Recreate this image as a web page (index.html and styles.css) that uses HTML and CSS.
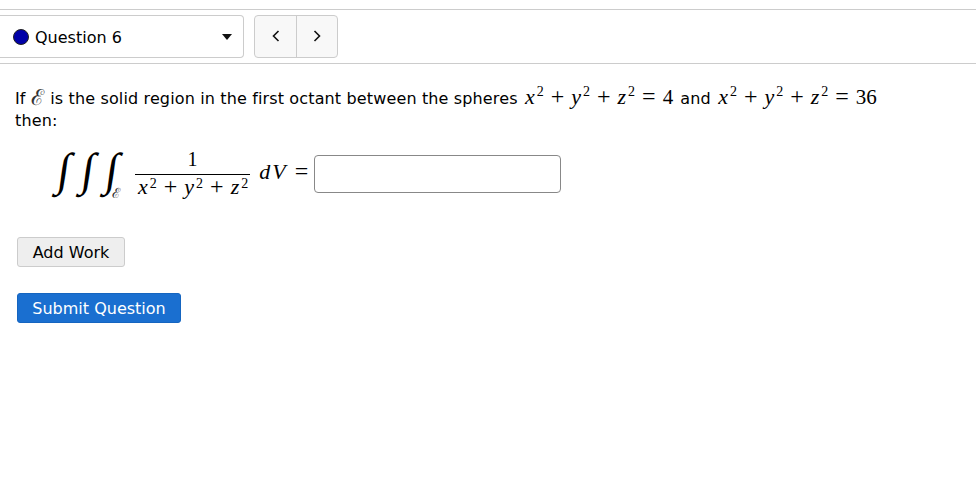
FILE: index.html
```html
<!DOCTYPE html>
<html lang="en">
<head>
  <meta charset="UTF-8" />
  <title>Question 6</title>
  <link rel="stylesheet" href="styles.css">
</head>
<body>
  <!-- Question picker -->
  <div class="nav-bar">
    <div class="picker">
      <span class="dot"></span>
      <span class="picker-label">Question 6</span>
      <span class="caret"></span>
    </div>
    <div class="arrows">
      <button class="arrow">
        <svg width="8" height="12" viewBox="0 0 8 12"><path d="M6.5 1 L1.5 6 L6.5 11" fill="none" stroke="#111" stroke-width="1.6"/></svg>
      </button>
      <button class="arrow">
        <svg width="8" height="12" viewBox="0 0 8 12"><path d="M1.5 1 L6.5 6 L1.5 11" fill="none" stroke="#111" stroke-width="1.6"/></svg>
      </button>
    </div>
  </div>

  <div class="question">
    <p class="prompt">If <span class="script">ℰ</span> is the solid region in the first octant between the spheres
      <span class="math"><i>x</i><sup>2</sup><span class="op">+</span><i>y</i><sup>2</sup><span class="op">+</span><i>z</i><sup>2</sup><span class="op">=</span>4</span> and
      <span class="math"><i>x</i><sup>2</sup><span class="op">+</span><i>y</i><sup>2</sup><span class="op">+</span><i>z</i><sup>2</sup><span class="op">=</span>36</span> then:</p>

    <div class="equation">
      <div class="integrals">
        <span class="integral">∫</span>
        <span class="integral">∫</span>
        <span class="integral">∫</span>
        <span class="script sub">ℰ</span>
      </div>
      <div class="fraction">
        <span class="numerator">1</span>
        <span class="math denominator"><i>x</i><sup>2</sup><span class="op">+</span><i>y</i><sup>2</sup><span class="op">+</span><i>z</i><sup>2</sup></span>
      </div>
      <span class="math dv"><i>dV</i><span class="op">=</span></span>
      <input class="answer" type="text">
    </div>

    <button class="btn-work">Add Work</button>
    <button class="btn-submit">Submit Question</button>
  </div>
</body>
</html>
```

FILE: styles.css
```css
* {
  box-sizing: border-box;
}

body {
  margin: 0;
  padding-top: 9px;
  background-color: white;
  color: black;
  font-family: "DejaVu Sans", sans-serif;
  font-size: 16px;
  overflow: hidden;
}

.nav-bar {
  display: flex;
  align-items: center;
  gap: 10px;
  height: 55px;
  border-top: 1px solid #ccc;
  border-bottom: 1px solid #ccc;
}

.picker {
  display: flex;
  align-items: center;
  width: 244px;
  height: 43px;
  padding: 0 11px 0 13px;
  border: 1px solid #ccc;
  border-left: none;
  border-radius: 0 4px 4px 0;
}

.dot {
  width: 16px;
  height: 16px;
  border-radius: 50%;
  background: #0000a8;
  border: 1px solid #222;
}

.picker-label {
  margin-left: 6px;
  padding-top: 1px;
  flex: 1;
}

.caret {
  width: 0;
  height: 0;
  border-left: 5px solid transparent;
  border-right: 5px solid transparent;
  border-top: 6px solid #111;
}

.arrows {
  display: flex;
  height: 43px;
  border: 1px solid #ccc;
  border-radius: 4px;
  background: #f8f8f8;
  overflow: hidden;
}

.arrow {
  width: 41px;
  padding: 0;
  border: none;
  background: none;
}

.arrow + .arrow {
  border-left: 1px solid #ccc;
}

.question {
  padding: 22px 15px;
}

.prompt {
  margin: 0;
  width: 880px;
  line-height: 22px;
  letter-spacing: 0.14px;
}

.math {
  margin: 0 2px;
  font-family: "Liberation Serif", serif;
  font-size: 21px;
  letter-spacing: 0;
}

.math i {
  font-size: 22px;
  font-style: italic;
  letter-spacing: 2px;
}

.op {
  margin: 0 7px;
  font-size: 24px;
  line-height: 0;
}

sup {
  font-size: 14px;
  line-height: 0;
  vertical-align: 8px;
}

.script {
  margin-right: 1px;
  font-family: "DejaVu Serif", serif;
  font-size: 22px;
  line-height: 0;
  vertical-align: -1px;
  color: #333;
}

.equation {
  display: flex;
  align-items: center;
  margin: 11px 0 0 33px;
  height: 62px;
  font-family: "Liberation Serif", serif;
}

.integrals {
  display: flex;
  align-items: center;
  position: relative;
  width: 86px;
  padding: 0 0 10px 10px;
}

.integral {
  width: 24px;
  font-size: 46px;
  font-style: italic;
  transform: skewX(-8deg);
}

.sub {
  position: absolute;
  left: 64px;
  bottom: 13px;
  font-size: 14px;
}

.fraction {
  display: flex;
  flex-direction: column;
  align-items: center;
  margin: 0 0 2px -1px;
  font-size: 20px;
}

.numerator {
  padding-bottom: 3px;
  line-height: 24px;
}

.denominator {
  border-top: 1px solid black;
  padding: 0 2px 0 3px;
  line-height: 24px;
  white-space: nowrap;
}

.denominator sup {
  font-size: 14px;
  vertical-align: 6px;
}

.dv {
  margin: 0 0 4px 7px;
}

.dv .op {
  margin-right: 6px;
}

.answer {
  width: 247px;
  height: 38px;
  border: 1px solid #888;
  border-radius: 4px;
}

button {
  font-family: inherit;
  font-size: 16px;
}

.btn-work, .btn-submit {
  display: block;
  border-radius: 3px;
}

.btn-work {
  margin: 32px 0 0 2px;
  width: 108px;
  height: 30px;
  padding: 0;
  background: #eee;
  border: 1px solid #ccc;
  color: black;
}

.btn-submit {
  margin: 26px 0 0 2px;
  width: 164px;
  height: 30px;
  padding: 0;
  background: #1a6fd0;
  border: 1px solid #1565c0;
  color: white;
}
```
